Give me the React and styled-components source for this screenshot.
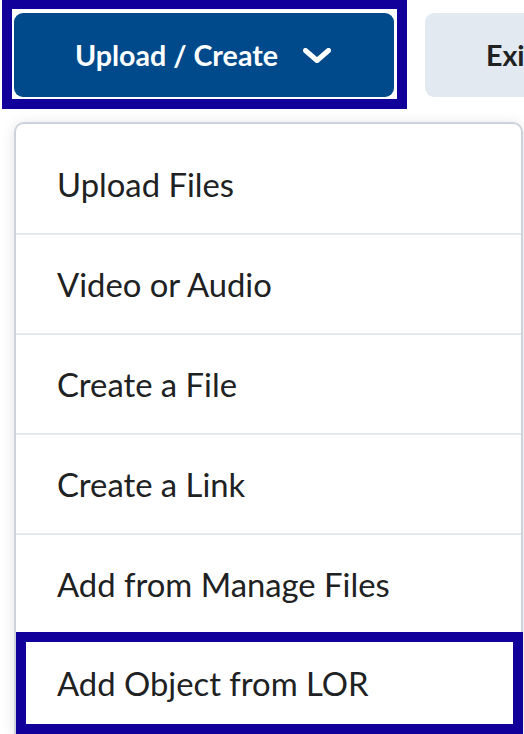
import React from "react";
import styled, { createGlobalStyle } from "styled-components";

const GlobalStyle = createGlobalStyle`
  html, body {
    margin: 0;
    padding: 0;
    background: #ffffff;
    overflow: hidden;
  }
  body {
    font-family: Lato, "Noto Sans", sans-serif;
    color: #202122;
  }
`;

const Page = styled.div`
  width: 524px;
  height: 734px;
  overflow: hidden;
`;

const Toolbar = styled.div`
  display: flex;
  align-items: flex-start;
  gap: 18px;
  padding-left: 2px;
  white-space: nowrap;
`;

const FocusRing = styled.div`
  border: 10px solid #12009b;
  border-top-width: 9px;
  padding: 4px 3px 2px 2px;
  background: #ffffff;
`;

const PrimaryButton = styled.button`
  display: flex;
  align-items: center;
  gap: 25px;
  height: 84px;
  padding: 0 63px 0 61px;
  border: none;
  border-radius: 9px;
  background: #004a8b;
  color: #ffffff;
  font-family: Lato, "Noto Sans", sans-serif;
  font-weight: 700;
  font-size: 28.6px;
  cursor: pointer;
`;

const SecondaryButton = styled.button`
  flex-shrink: 0;
  display: flex;
  align-items: center;
  height: 84px;
  margin-top: 13px;
  padding: 0 61px;
  border: none;
  border-radius: 9px;
  background: #e3e9f1;
  color: #202122;
  font-family: Lato, "Noto Sans", sans-serif;
  font-weight: 700;
  font-size: 28.6px;
`;

const Menu = styled.div`
  margin: 13px 0 0 14px;
  width: 505px;
  padding-top: 11px;
  background: #ffffff;
  border: 2px solid #cdd3dc;
  border-bottom: none;
  border-radius: 10px 10px 0 0;
  box-shadow: 0 2px 14px rgba(0, 0, 0, 0.12);
`;

const Item = styled.div`
  display: flex;
  align-items: center;
  height: 98px;
  padding-left: 41px;
  font-size: 32.8px;
  color: #202122;
  border-bottom: 2px solid #e3e9f1;
  box-sizing: content-box;
`;

const FocusedItem = styled.div`
  display: flex;
  align-items: center;
  height: 82px;
  margin: -3px -2px 0 0;
  padding-left: 31px;
  font-size: 32.8px;
  color: #202122;
  border: 10px solid #12009b;
  box-sizing: content-box;
`;

const Chevron = () => (
  <svg width="28" height="15" viewBox="0 0 28 15" aria-hidden="true">
    <polyline
      points="2.5,2.5 14,12.5 25.5,2.5"
      fill="none"
      stroke="#ffffff"
      strokeWidth="5"
      strokeLinecap="round"
      strokeLinejoin="round"
    />
  </svg>
);

const items = [
  "Upload Files",
  "Video or Audio",
  "Create a File",
  "Create a Link",
  "Add from Manage Files",
];

export default function App() {
  return (
    <Page>
      <GlobalStyle />
      <Toolbar>
        <FocusRing>
          <PrimaryButton>
            Upload / Create
            <Chevron />
          </PrimaryButton>
        </FocusRing>
        <SecondaryButton>Existing Activities</SecondaryButton>
      </Toolbar>
      <Menu>
        {items.map((label) => (
          <Item key={label}>{label}</Item>
        ))}
        <FocusedItem>Add Object from LOR</FocusedItem>
      </Menu>
    </Page>
  );
}
